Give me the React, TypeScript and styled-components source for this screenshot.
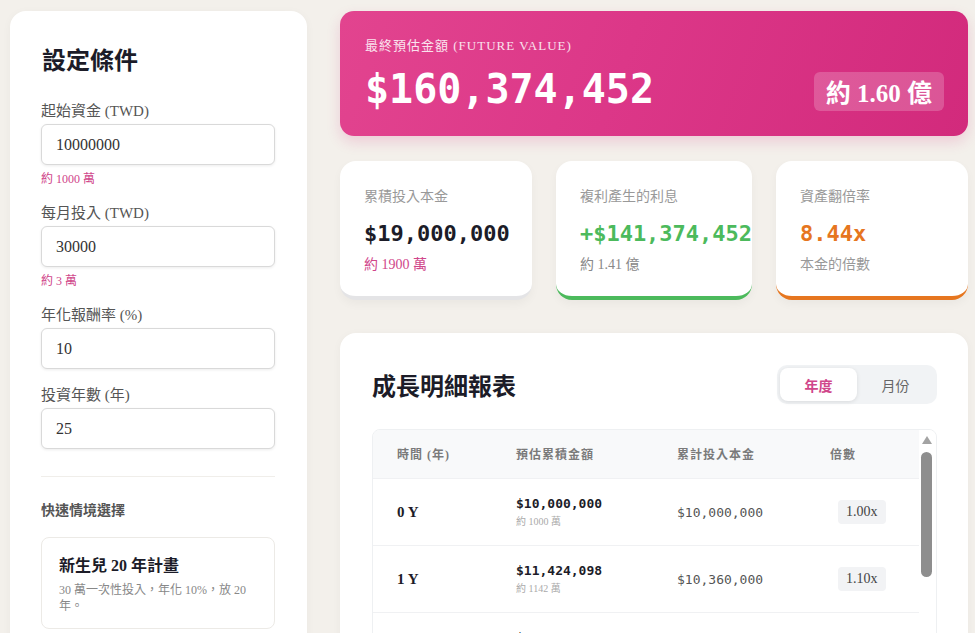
import React, { useMemo, useState } from 'react';
import styled, { createGlobalStyle } from 'styled-components';

const serif = `"Liberation Serif", "Noto Sans CJK TC", serif`;
const mono = `"DejaVu Sans Mono", "Liberation Mono", monospace`;

const colors = {
  bg: '#f3f0eb',
  ink: '#1c1c28',
  gray: '#8a8a8a',
  pink: '#d0468a',
  green: '#4cba5c',
  orange: '#e6761f',
}

const GlobalStyle = createGlobalStyle`
  * { box-sizing: border-box; }
  html, body { margin: 0; padding: 0; background: ${colors.bg}; }
  body { font-family: ${serif}; color: ${colors.ink}; }
`

const Page = styled.div`
  display: grid;
  grid-template-columns: 297px 1fr;
  gap: 33px;
  padding: 11px 7px 24px 10px;
  align-items: start;
`

const Panel = styled.div`
  background: #fff;
  border-radius: 16px;
  padding: 33px 32px 32px 31px;
  box-shadow: 0 2px 10px rgba(0, 0, 0, 0.04);
`

const PanelTitle = styled.h2`
  margin: 0 0 22px 1px;
  font-size: 24px;
  font-weight: 700;
  line-height: 34px;
`

const Field = styled.div`
  display: flex;
  flex-direction: column;
  margin-bottom: 15px;
`

const Label = styled.label`
  font-size: 15px;
  color: #555;
  line-height: 22px;
  margin-bottom: 2px;
`

const Input = styled.input`
  height: 41px;
  width: 100%;
  border: 1px solid #d9d9d9;
  border-radius: 6px;
  padding: 0 14px;
  font-family: ${serif};
  font-size: 16px;
  color: #333;
  box-shadow: 0 1px 3px rgba(0, 0, 0, 0.08);
  outline: none;
`

const Hint = styled.div`
  font-size: 12px;
  color: ${colors.pink};
  margin-top: 6px;
  line-height: 16px;
`

const Divider = styled.hr`
  border: none;
  border-top: 1px solid #f0eeea;
  margin: 27px 0 24px;
`

const SectionLabel = styled.div`
  font-size: 14px;
  font-weight: 700;
  color: #555;
  margin-bottom: 16px;
  line-height: 20px;
`

const PresetCard = styled.div`
  border: 1px solid #eceae6;
  border-radius: 8px;
  padding: 16px 16px 14px 17px;
  margin-bottom: 12px;
  cursor: pointer;
`

const PresetTitle = styled.div`
  font-size: 16px;
  font-weight: 700;
  line-height: 24px;
  margin-bottom: 4px;
`

const PresetDesc = styled.div`
  font-size: 12px;
  color: #888;
  line-height: 16px;
`

const Main = styled.div`
  display: flex;
  flex-direction: column;
`

const Hero = styled.div`
  background: linear-gradient(110deg, #e2448f 0%, #dc3788 45%, #d22a7c 100%);
  border-radius: 14px;
  padding: 26px 24px 19px 25px;
  color: #fff;
  box-shadow: 0 6px 14px rgba(210, 42, 124, 0.18);
`

const HeroLabel = styled.div`
  font-size: 13px;
  letter-spacing: 1px;
  opacity: 0.85;
  line-height: 18px;
`

const HeroRow = styled.div`
  display: flex;
  align-items: center;
  justify-content: space-between;
  margin-top: 6px;
`

const HeroValue = styled.div`
  font-family: ${mono};
  font-weight: 700;
  font-size: 40px;
  line-height: 56px;
`

const HeroBadge = styled.div`
  background: rgba(255, 255, 255, 0.2);
  border-radius: 6px;
  padding: 0 12px;
  height: 39px;
  display: flex;
  align-items: center;
  font-size: 25px;
  font-weight: 700;
  margin-top: 4px;
`

const Stats = styled.div`
  display: grid;
  grid-template-columns: repeat(3, 1fr);
  gap: 24px;
  margin-top: 25px;
`

const StatCard = styled.div<{ accent: string }>`
  background: #fff;
  border-radius: 16px;
  border-bottom: 4px solid ${p => p.accent};
  padding: 25px 0 24px 24px;
  height: 139px;
  overflow: visible;
  white-space: nowrap;
  box-shadow: 0 4px 10px rgba(0, 0, 0, 0.04);
`

const StatLabel = styled.div`
  font-size: 14px;
  color: #999;
  line-height: 22px;
`

const StatValue = styled.div<{ color: string }>`
  font-family: ${mono};
  font-weight: 700;
  font-size: 22px;
  color: ${p => p.color};
  margin-top: 11px;
  line-height: 30px;
`

const StatSub = styled.div<{ color: string }>`
  font-size: 14px;
  color: ${p => p.color};
  margin-top: 6px;
  line-height: 20px;
`

const TableCard = styled.div`
  background: #fff;
  border-radius: 16px;
  margin-top: 33px;
  padding: 32px 31px 32px 32px;
  box-shadow: 0 2px 10px rgba(0, 0, 0, 0.04);
`

const TableHead = styled.div`
  display: flex;
  align-items: center;
  justify-content: space-between;
  margin-bottom: 25px;
`

const TableTitle = styled.h3`
  margin: 4px 0 0;
  font-size: 24px;
  font-weight: 700;
  line-height: 34px;
`

const Toggle = styled.div`
  display: flex;
  background: #f1f3f5;
  border-radius: 10px;
  padding: 3px;
`

const ToggleBtn = styled.button<{ active: boolean }>`
  width: 77px;
  height: 33px;
  border: none;
  border-radius: 8px;
  font-family: ${serif};
  font-size: 14px;
  font-weight: ${p => (p.active ? 700 : 400)};
  color: ${p => (p.active ? colors.pink : '#666')};
  background: ${p => (p.active ? '#fff' : 'transparent')};
  box-shadow: ${p => (p.active ? '0 1px 4px rgba(0,0,0,0.1)' : 'none')};
  cursor: pointer;
`

const TableFrame = styled.div`
  display: flex;
  border: 1px solid #eef0f2;
  border-radius: 8px;
  overflow: hidden;
`

const TableBody = styled.div`
  flex: 1;
  max-height: 440px;
  overflow: hidden;
`

const ScrollTrack = styled.div`
  width: 17px;
  display: flex;
  flex-direction: column;
  align-items: center;
  padding: 6px 2px 0 0;
  background: #fff;
`

const ScrollThumb = styled.div`
  width: 11px;
  height: 125px;
  margin-top: 8px;
  border-radius: 6px;
  background: #8e8e8e;
`

const Row = styled.div<{ head?: boolean }>`
  display: grid;
  grid-template-columns: 119px 161px 153px 1fr;
  align-items: center;
  padding-left: 24px;
  height: ${p => (p.head ? '49px' : '67px')};
  background: ${p => (p.head ? '#f8f9fa' : '#fff')};
  border-bottom: 1px solid #f0f1f3;
`

const HeadCell = styled.div`
  font-size: 12px;
  font-weight: 700;
  color: #7a7a7a;
  letter-spacing: 1px;
`

const YearCell = styled.div`
  font-size: 15px;
  font-weight: 700;
`

const MoneyCell = styled.div`
  display: flex;
  flex-direction: column;
`

const Money = styled.span<{ muted?: boolean }>`
  font-family: ${mono};
  font-size: 13px;
  font-weight: ${p => (p.muted ? 400 : 700)};
  color: ${p => (p.muted ? '#555' : colors.ink)};
`

const MoneySub = styled.span`
  font-size: 10px;
  color: #aaa;
  margin-top: 2px;
`

const Mult = styled.span`
  justify-self: start;
  margin-left: 8px;
  background: #f2f3f5;
  border-radius: 4px;
  padding: 4px 8px;
  font-size: 14px;
  color: #444;
`

const fmt = (n: number) => '$' + Math.round(n).toLocaleString('en-US')
const wan = (n: number) => `約 ${Math.round(n / 10000)} 萬`
const yi = (n: number) => `約 ${(n / 1e8).toFixed(2)} 億`

export default function App() {
  const [initial, setInitial] = useState('10000000')
  const [monthly, setMonthly] = useState('30000')
  const [rate, setRate] = useState('10')
  const [years, setYears] = useState('25')
  const [mode, setMode] = useState<'year' | 'month'>('year')

  const rows = useMemo(() => {
    const p0 = Number(initial) || 0
    const m = Number(monthly) || 0
    const r = (Number(rate) || 0) / 100 / 12
    const n = Number(years) || 0
    const out = [{ y: 0, value: p0, principal: p0 }]
    let value = p0
    let principal = p0
    for (let i = 1; i <= n * 12; i++) {
      value = value * (1 + r) + m
      principal += m
      if (i % 12 === 0) out.push({ y: i / 12, value, principal })
    }
    return out
  }, [initial, monthly, rate, years])

  const last = rows[rows.length - 1]
  const interest = last.value - last.principal
  const ratio = last.value / last.principal

  return (
    <>
      <GlobalStyle />
      <Page>
        <Panel>
          <PanelTitle>設定條件</PanelTitle>
          <Field>
            <Label>起始資金 (TWD)</Label>
            <Input value={initial} onChange={e => setInitial(e.target.value)} />
            <Hint>{wan(Number(initial))}</Hint>
          </Field>
          <Field>
            <Label>每月投入 (TWD)</Label>
            <Input value={monthly} onChange={e => setMonthly(e.target.value)} />
            <Hint>{wan(Number(monthly))}</Hint>
          </Field>
          <Field>
            <Label>年化報酬率 (%)</Label>
            <Input value={rate} onChange={e => setRate(e.target.value)} />
          </Field>
          <Field>
            <Label>投資年數 (年)</Label>
            <Input value={years} onChange={e => setYears(e.target.value)} />
          </Field>
          <Divider />
          <SectionLabel>快速情境選擇</SectionLabel>
          <PresetCard onClick={() => { setInitial('300000'); setMonthly('0'); setRate('10'); setYears('20') }}>
            <PresetTitle>新生兒 20 年計畫</PresetTitle>
            <PresetDesc>30 萬一次性投入，年化 10%，放 20 年。</PresetDesc>
          </PresetCard>
        </Panel>

        <Main>
          <Hero>
            <HeroLabel>最終預估金額 (FUTURE VALUE)</HeroLabel>
            <HeroRow>
              <HeroValue>{fmt(last.value)}</HeroValue>
              <HeroBadge>{`約 ${(last.value / 1e8).toFixed(2)} 億`}</HeroBadge>
            </HeroRow>
          </Hero>

          <Stats>
            <StatCard accent="#e4e4e6">
              <StatLabel>累積投入本金</StatLabel>
              <StatValue color={colors.ink}>{fmt(last.principal)}</StatValue>
              <StatSub color={colors.pink}>{wan(last.principal)}</StatSub>
            </StatCard>
            <StatCard accent={colors.green}>
              <StatLabel>複利產生的利息</StatLabel>
              <StatValue color={colors.green}>+{fmt(interest)}</StatValue>
              <StatSub color="#888">{yi(interest)}</StatSub>
            </StatCard>
            <StatCard accent={colors.orange}>
              <StatLabel>資產翻倍率</StatLabel>
              <StatValue color={colors.orange}>{ratio.toFixed(2)}x</StatValue>
              <StatSub color="#999">本金的倍數</StatSub>
            </StatCard>
          </Stats>

          <TableCard>
            <TableHead>
              <TableTitle>成長明細報表</TableTitle>
              <Toggle>
                <ToggleBtn active={mode === 'year'} onClick={() => setMode('year')}>年度</ToggleBtn>
                <ToggleBtn active={mode === 'month'} onClick={() => setMode('month')}>月份</ToggleBtn>
              </Toggle>
            </TableHead>
            <TableFrame>
              <TableBody>
                <Row head>
                  <HeadCell>時間 (年)</HeadCell>
                  <HeadCell>預估累積金額</HeadCell>
                  <HeadCell>累計投入本金</HeadCell>
                  <HeadCell>倍數</HeadCell>
                </Row>
                {rows.slice(0, 6).map(r => (
                  <Row key={r.y}>
                    <YearCell>{r.y} Y</YearCell>
                    <MoneyCell>
                      <Money>{fmt(r.value)}</Money>
                      <MoneySub>{wan(r.value)}</MoneySub>
                    </MoneyCell>
                    <Money muted>{fmt(r.principal)}</Money>
                    <Mult>{(r.value / r.principal).toFixed(2)}x</Mult>
                  </Row>
                ))}
              </TableBody>
              <ScrollTrack>
                <svg width="10" height="8" viewBox="0 0 10 8">
                  <polygon points="5,0 10,8 0,8" fill="#a3a3a3" />
                </svg>
                <ScrollThumb />
              </ScrollTrack>
            </TableFrame>
          </TableCard>
        </Main>
      </Page>
    </>
  )
}
